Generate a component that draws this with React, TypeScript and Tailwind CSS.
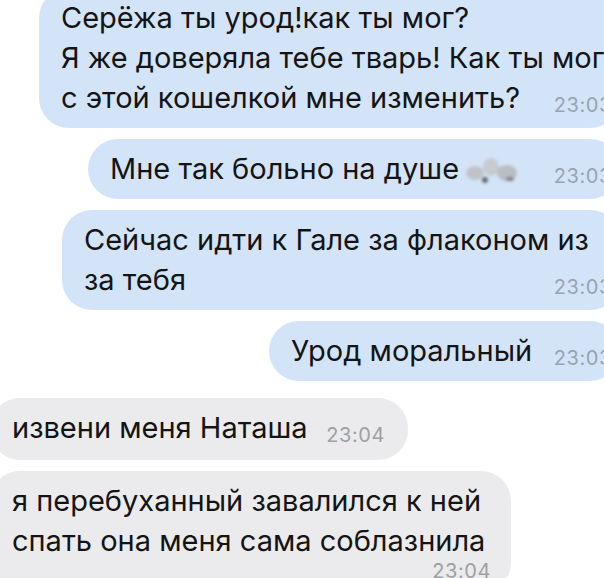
import React from 'react';

type Msg = {
  out: boolean;
  lines: React.ReactNode[];
  time: string;
  width: string;
  timeBelow?: boolean;
  extra?: string;
};

const Blur = () => (
  <span className="inline-block align-middle ml-[4px] w-[56px] h-[30px] blur-[1.5px]">
    <svg viewBox="0 0 56 30" className="w-full h-full">
      <ellipse cx="12" cy="17" rx="9" ry="7" fill="#bfc3c9" />
      <ellipse cx="28" cy="11" rx="8" ry="9" fill="#c7cacf" />
      <ellipse cx="44" cy="17" rx="10" ry="8" fill="#b9bdc4" />
      <ellipse cx="22" cy="24" rx="3" ry="3" fill="#62676e" />
      <ellipse cx="47" cy="23" rx="4" ry="2" fill="#7d828a" />
    </svg>
  </span>
);

const messages: Msg[] = [
  {
    out: true,
    lines: ['Серёжа ты урод!как ты мог?', 'Я же доверяла тебе тварь! Как ты мог', 'с этой кошелкой мне изменить?'],
    time: '23:03',
    width: 'w-[581px]',
  },
  { out: true, lines: [<>Мне так больно на душе<Blur /></>], time: '23:03', width: 'w-[532px]' },
  { out: true, lines: ['Сейчас идти к Гале за флаконом из', 'за тебя'], time: '23:03', width: 'w-[558px]' },
  { out: true, lines: ['Урод моральный'], time: '23:03', width: 'w-[351px]' },
  { out: false, lines: ['извени меня Наташа'], time: '23:04', width: 'w-[418px]', extra: 'mt-[6px] h-[62px]' },
  {
    out: false,
    lines: ['я перебуханный завалился к ней', 'спать она меня сама соблазнила'],
    time: '23:04',
    width: 'w-[521px]',
    timeBelow: true,
  },
];

function Time({ m }: { m: Msg }) {
  return (
    <span
      className={`shrink-0 text-[20px] leading-[24px] tracking-[0.6px] whitespace-nowrap ${m.out ? 'text-[#98a3b1]' : 'text-[#9d9fa4]'} ${m.timeBelow ? 'self-end -mt-[2px]' : 'ml-3 mb-[1px]'}`}
    >
      {m.time}
    </span>
  );
}

export default function App() {
  return (
    <div
      className="w-[604px] h-[578px] overflow-hidden bg-white"
      style={{ fontFamily: 'Inter, "Noto Sans", sans-serif' }}
    >
      <div className="w-[630px] -ml-[10px] -mt-[12px] flex flex-col gap-[11px]">
        {messages.map((m, i) => (
          <div
            key={i}
            className={`${m.width} ${m.extra ?? ''} ${m.out ? 'self-end bg-[#d4e4f8] pr-[8px]' : m.timeBelow ? 'self-start bg-[#ebebed] pr-[20px]' : 'self-start bg-[#ebebed] pr-[23px]'} rounded-[30px] pl-[22px] py-[10px] flex flex-col`}
          >
            <div className="text-[29px] leading-[40px] text-[#141414] whitespace-nowrap">
              {m.lines.map((l, j) => {
                const last = j === m.lines.length - 1 && !m.timeBelow;
                return last ? (
                  <div key={j} className="flex items-end justify-between">
                    <span>{l}</span>
                    <Time m={m} />
                  </div>
                ) : (
                  <div key={j}>{l}</div>
                );
              })}
            </div>
            {m.timeBelow && <Time m={m} />}
          </div>
        ))}
      </div>
    </div>
  );
}
